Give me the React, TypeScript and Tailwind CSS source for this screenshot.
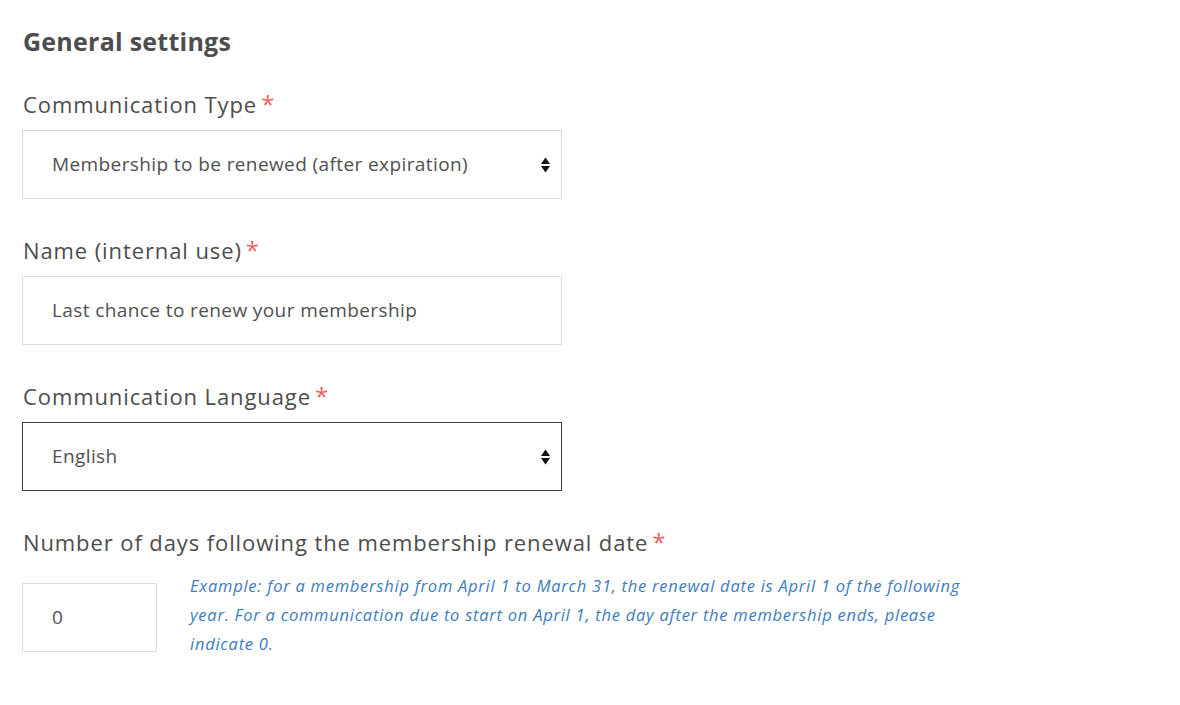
import React from "react";

const Arrows = () => (
  <svg width="9" height="16" viewBox="0 0 9 16" className="absolute right-[11px] top-1/2 -translate-y-1/2">
    <path d="M4.5 0.5 L9 7 H0 Z" fill="#111" />
    <path d="M4.5 15.5 L9 9 H0 Z" fill="#111" />
  </svg>
);

const Label = ({ children }: { children: React.ReactNode }) => (
  <div className="text-[22px] leading-[30px] font-medium text-[#4d4d4d] tracking-[0.9px]">
    {children}
    <span className="text-[#f05f5f] ml-[4px] text-[24px] leading-[20px] font-normal">*</span>
  </div>
);

export default function App() {
  return (
    <div className="w-[1180px] h-[705px] bg-white pl-[23px] pt-[25px]" style={{ fontFamily: "'Open Sans', sans-serif" }}>
      <h2 className="text-[25px] leading-[32px] font-bold text-[#4d4d4d] tracking-[0.25px]">General settings</h2>

      <div className="mt-[32px]">
        <Label>Communication Type</Label>
        <div className="relative mt-[11px] -ml-px w-[540px] h-[69px] border border-[#d5dde6] flex items-center pl-[29px] text-[19px] tracking-[0.4px] text-[#505050]">
          Membership to be renewed (after expiration)
          <Arrows />
        </div>
      </div>

      <div className="mt-[36px]">
        <Label>Name (internal use)</Label>
        <div className="relative mt-[11px] -ml-px w-[540px] h-[69px] border border-[#d5dde6] flex items-center pl-[29px] text-[19px] tracking-[0.4px] text-[#505050]">
          Last chance to renew your membership
        </div>
      </div>

      <div className="mt-[36px]">
        <Label>Communication Language</Label>
        <div className="relative mt-[11px] -ml-px w-[540px] h-[69px] border border-[#3c3c3c] flex items-center pl-[29px] text-[19px] tracking-[0.4px] text-[#505050]">
          English
          <Arrows />
        </div>
      </div>

      <div className="mt-[36px]">
        <Label>Number of days following the membership renewal date</Label>
        <div className="mt-[14px] -ml-px flex items-start">
          <div className="mt-[12px] w-[135px] h-[69px] border border-[#d5dde6] flex items-center pl-[29px] text-[19px] text-[#505050] shrink-0">
            0
          </div>
          <p className="ml-[33px] w-[860px] text-[16.5px] leading-[29px] italic text-[#3d7cc0] tracking-[0.75px]">
            Example: for a membership from April 1 to March 31, the renewal date is April 1 of the following
            <br />
            year. For a communication due to start on April 1, the day after the membership ends, please
            <br />
            indicate 0.
          </p>
        </div>
      </div>
    </div>
  );
}
